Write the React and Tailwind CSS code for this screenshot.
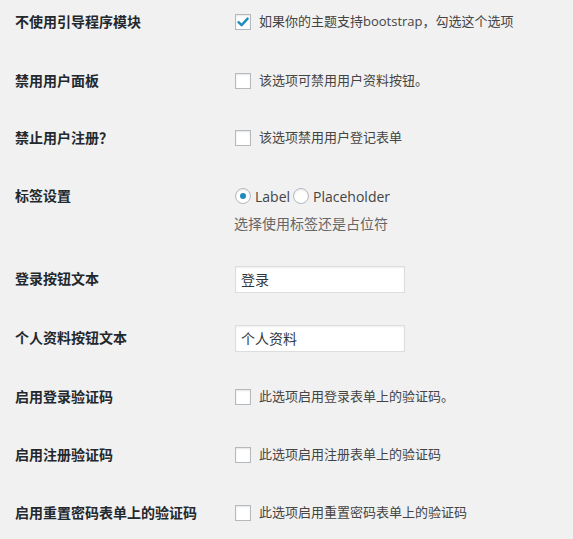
import React, { useState } from 'react';

const font = { fontFamily: '"Open Sans", "Noto Sans CJK SC", sans-serif' };

const Checkbox = ({ checked }) => (
    <span className="w-4 h-4 shrink-0 bg-white border border-[#b4b9be] shadow-[inset_0_1px_2px_rgba(0,0,0,0.1)] flex items-center justify-center">
        {checked && (
            <svg width="14" height="14" viewBox="0 0 14 14">
                <path d="M2.5 7.2 L5.6 10.2 L11.6 3.6" fill="none" stroke="#1e8cbe" strokeWidth="2.4" strokeLinecap="round" strokeLinejoin="round" />
            </svg>
        )}
    </span>
);

const Radio = ({ checked }) => (
    <span className="w-4 h-4 shrink-0 rounded-full bg-white border border-[#b4b9be] shadow-[inset_0_1px_2px_rgba(0,0,0,0.1)] flex items-center justify-center">
        {checked && <span className="w-[6px] h-[6px] rounded-full bg-[#1e8cbe]" />}
    </span>
);

const CheckRow = ({ checked, text }) => (
    <div className="flex items-center gap-2 text-[13px] text-[#444]">
        <Checkbox checked={checked} />
        <span>{text}</span>
    </div>
);

const TextInput = ({ value }) => (
    <div className="w-[170px] h-[27px] bg-white border border-[#ddd] shadow-[inset_0_1px_2px_rgba(0,0,0,0.07)] flex items-center px-[5px] text-[14px] text-[#32373c]">
        {value}
    </div>
);

export default function App() {
    const [labelMode] = useState('label');

    const rows = [
        { mt: 'mt-2', label: '不使用引导程序模块', field: <CheckRow checked text="如果你的主题支持bootstrap，勾选这个选项" /> },
        { mt: 'mt-[31px]', label: '禁用用户面板', field: <CheckRow text="该选项可禁用用户资料按钮。" /> },
        { mt: 'mt-[29px]', label: '禁止用户注册？', field: <CheckRow text="该选项禁用用户登记表单" /> },
        {
            mt: 'mt-[30px]',
            label: '标签设置',
            field: (
                <div className="flex items-center text-[14px] text-[#444]">
                    <Radio checked={labelMode === 'label'} />
                    <span className="ml-1">Label</span>
                    <span className="ml-[3px]"><Radio checked={labelMode === 'placeholder'} /></span>
                    <span className="ml-1">Placeholder</span>
                </div>
            ),
            desc: '选择使用标签还是占位符',
        },
        { mt: 'mt-[31px]', label: '登录按钮文本', field: <TextInput value="登录" /> },
        { mt: 'mt-[31px]', label: '个人资料按钮文本', field: <TextInput value="个人资料" /> },
        { mt: 'mt-[31px]', label: '启用登录验证码', field: <CheckRow text="此选项启用登录表单上的验证码。" /> },
        { mt: 'mt-[30px]', label: '启用注册验证码', field: <CheckRow text="此选项启用注册表单上的验证码" /> },
        { mt: 'mt-[30px]', label: '启用重置密码表单上的验证码', field: <CheckRow text="此选项启用重置密码表单上的验证码" /> },
    ];

    return (
        <div className="w-[573px] h-[539px] overflow-hidden bg-[#f1f1f1] pl-[15px] flow-root" style={font}>
            {rows.map((row) => (
                <div key={row.label} className={row.mt}>
                    <div className="flex items-center h-7">
                        <div className="w-[220px] shrink-0 text-[14px] font-bold text-[#23282d] leading-5">{row.label}</div>
                        {row.field}
                    </div>
                    {row.desc && (
                        <div className="ml-[219px] mt-1 leading-5 text-[14px] text-[#666]">{row.desc}</div>
                    )}
                </div>
            ))}
        </div>
    );
}
